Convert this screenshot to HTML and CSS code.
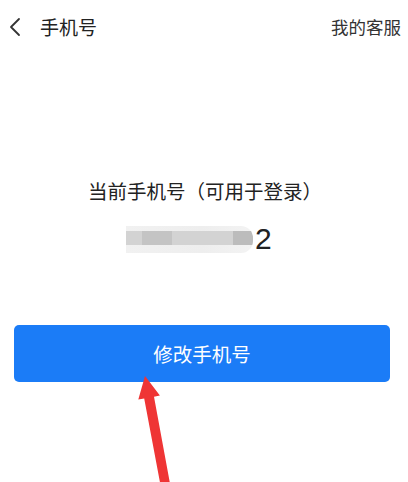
FILE: index.html
```html
<!DOCTYPE html>
<html lang="zh">
<head>
<meta charset="utf-8">
<title>手机号</title>
<link rel="stylesheet" href="styles.css">
</head>
<body>
<div class="page">
  <header class="nav">
    <div class="nav-left">
      <svg class="back" width="14" height="20" viewBox="0 0 14 20"><path d="M11 2 L3 10 L11 18" fill="none" stroke="#333" stroke-width="1.8" stroke-linecap="round" stroke-linejoin="round"/></svg>
      <span class="title">手机号</span>
    </div>
    <span class="service">我的客服</span>
  </header>
  <main class="content">
    <p class="label">当前手机号（可用于登录）</p>
    <div class="number">
      <span class="mask"></span>
      <span class="digit">2</span>
    </div>
    <button class="btn">修改手机号</button>
  </main>
  <svg class="arrow" width="408" height="482" viewBox="0 0 408 482">
    <polygon points="145,376 159.9,395.6 154,396.7 169.9,483 160.1,483 144.2,398.5 138.3,399.6" fill="#ef3535"/>
  </svg>
</div>
</body>
</html>
```
FILE: styles.css
```css
html, body {
  margin: 0;
  padding: 0;
  background: #fff;
}
.page {
  position: relative;
  width: 408px;
  height: 482px;
  overflow: hidden;
  font-family: "Noto Sans CJK SC", "Noto Sans", sans-serif;
  color: #333;
}
.nav {
  height: 54px;
  display: flex;
  align-items: center;
  justify-content: space-between;
  padding: 0 7px 0 8px;
}
.nav-left {
  display: flex;
  align-items: center;
}
.back {
  display: block;
}
.title {
  margin-left: 18px;
  font-size: 19px;
  line-height: 24px;
  color: #222;
}
.service {
  font-size: 17.5px;
  line-height: 24px;
  color: #333;
}
.content {
  display: flex;
  flex-direction: column;
}
.label {
  margin: 125px 0 0 0;
  text-align: center;
  font-size: 19.5px;
  line-height: 24px;
  color: #222;
  padding-left: 2px;
}
.number {
  margin-top: 20px;
  height: 32px;
  display: flex;
  align-items: center;
  padding-left: 126px;
}
.mask {
  width: 127px;
  height: 27px;
  border-radius: 0 12px 12px 0;
  background:
    linear-gradient(to right, transparent 0 16px, #c4c4c4 16px 46px, transparent 46px 107px, #bcbcbc 107px 127px) left 0 top 5px / 100% 14px no-repeat,
    linear-gradient(#d3d3d3, #d3d3d3) left 0 top 5px / 100% 14px no-repeat,
    linear-gradient(to right, #f1f1f1, #eeeeee 60%, #f3f3f3);
  filter: blur(0.7px);
}
.digit {
  margin-left: 2px;
  font-family: "Liberation Sans", Arial, sans-serif;
  font-size: 30px;
  line-height: 32px;
  color: #222;
}
.btn {
  margin: 70px 0 0 14px;
  width: 376px;
  height: 57px;
  border: none;
  border-radius: 5px;
  background: #1b7cf7;
  color: #fff;
  font-family: "Noto Sans CJK SC", "Noto Sans", sans-serif;
  font-size: 19.5px;
  padding: 0;
}
.arrow {
  position: absolute;
  left: 0;
  top: 0;
  pointer-events: none;
}
```
